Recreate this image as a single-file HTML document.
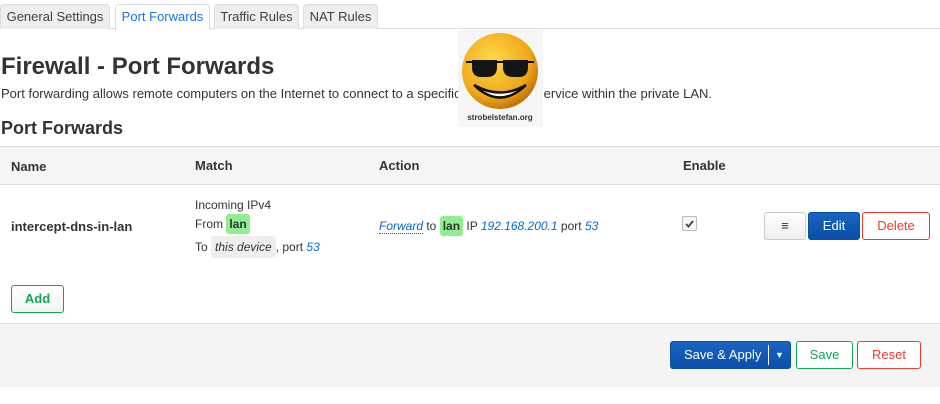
<!DOCTYPE html>
<html><head><meta charset="utf-8"><style>
*{margin:0;padding:0;box-sizing:border-box}
body{width:940px;height:404px;background:#fff;font-family:"Liberation Sans",Arial,sans-serif;color:#333;position:relative;overflow:hidden;font-size:13px}
.a{position:absolute;white-space:nowrap}
.tab{position:absolute;top:4px;height:25px;border:1px solid #ddd;border-bottom:none;border-radius:4px 4px 0 0;background:#eee;font-size:13px;line-height:24px;text-align:center;color:#404040}
.tab.act{background:#fff;color:#1a73e8;height:26px}
.lbl{display:inline-block;background:#90ee90;border-radius:3px;padding:0 3px;font-weight:bold;line-height:20px}
.gr{display:inline-block;background:#eee;border-radius:3px;padding:0 4px;font-style:italic;line-height:22px}
.bl{color:#0069d6;font-style:italic}
.btn{position:absolute;border-radius:3px;font-size:13px;text-align:center;border:1px solid}
</style></head><body>
<div class="a" style="left:0;top:28px;width:940px;border-top:1px solid #ddd"></div>
<div class="tab" style="left:0;width:110px">General Settings</div>
<div class="tab act" style="left:115px;width:95px">Port Forwards</div>
<div class="tab" style="left:214px;width:85px">Traffic Rules</div>
<div class="tab" style="left:303px;width:75px">NAT Rules</div>
<div class="a" style="left:1px;top:53px;font-size:24px;font-weight:bold;color:#333">Firewall - Port Forwards</div>
<div class="a" style="left:1px;top:86px;font-size:13px">Port forwarding allows remote computers on the Internet to connect to a specific computer or service within the private LAN.</div>
<div class="a" style="left:458px;top:30px;width:85px;height:97px;background:#f6f6f6">
<svg width="85" height="97" viewBox="0 0 85 97">
<defs><radialGradient id="g" cx="0.4" cy="0.35" r="0.7"><stop offset="0" stop-color="#ffd84a"/><stop offset="0.7" stop-color="#f0a818"/><stop offset="1" stop-color="#b86a08"/></radialGradient></defs>
<circle cx="42" cy="41" r="38" fill="url(#g)"/>
<path d="M8 32 L76 32" stroke="#111" stroke-width="2"/>
<path d="M14 30 h25 v7 q0 10 -10 10 h-6 q-9 0 -9 -10z" fill="#151515"/>
<path d="M45 30 h25 v7 q0 10 -9 10 h-6 q-10 0 -10 -10z" fill="#151515"/>
<path d="M16 55 Q42 80 68 55 Q42 70 16 55Z" fill="#fff" stroke="#111" stroke-width="2.5"/>
<text x="42" y="90" font-size="8" font-weight="bold" text-anchor="middle" fill="#333" font-family="Liberation Sans">strobelstefan.org</text>
</svg></div>
<div class="a" style="left:1px;top:118px;font-size:18px;font-weight:bold">Port Forwards</div>
<div class="a" style="left:0;top:146px;width:940px;height:39px;background:#f5f5f5;border-top:1px solid #ddd;border-bottom:1px solid #ddd"></div>
<div class="a" style="left:11px;top:159px;font-weight:bold">Name</div>
<div class="a" style="left:195px;top:158px;font-weight:bold">Match</div>
<div class="a" style="left:379px;top:158px;font-weight:bold">Action</div>
<div class="a" style="left:683px;top:158px;font-weight:bold">Enable</div>
<div class="a" style="left:11px;top:219px;font-weight:bold">intercept-dns-in-lan</div>
<div class="a" style="left:195px;top:198px;font-size:12px">Incoming IPv4</div>
<div class="a" style="left:195px;top:214px;font-size:12px">From <span class="lbl">lan</span></div>
<div class="a" style="left:195px;top:236px;font-size:12px">To <span class="gr">this device</span>, port <span class="bl">53</span></div>
<div class="a" style="left:379px;top:216px;font-size:12px"><span class="bl" style="border-bottom:1px dotted #0069d6">Forward</span> to <span class="lbl">lan</span> IP <span class="bl">192.168.200.1</span> port <span class="bl">53</span></div>
<div class="a" style="left:682px;top:216px;width:15px;height:15px;border:1px solid #bbb;border-radius:2px;background:#f8f8f8"><svg width="13" height="13" viewBox="0 0 13 13"><path d="M3 7 L5.5 9.5 L10 4" stroke="#444" stroke-width="1.8" fill="none"/></svg></div>
<div class="btn" style="left:764px;top:212px;width:42px;height:28px;border-color:#ccc;background:linear-gradient(#fff,#eee);line-height:26px;font-weight:bold">≡</div>
<div class="btn" style="left:808px;top:212px;width:52px;height:28px;border-color:#0a4fa0;background:linear-gradient(#1a64c4,#0a4fa8);color:#fff;line-height:26px">Edit</div>
<div class="btn" style="left:862px;top:212px;width:68px;height:28px;border-color:#f03a2a;background:#fff;color:#f03a2a;line-height:26px">Delete</div>
<div class="btn" style="left:11px;top:285px;width:53px;height:28px;border-color:#13a556;background:linear-gradient(#fff,#f4f4f4);color:#13a556;line-height:26px;font-weight:bold">Add</div>
<div class="a" style="left:0;top:323px;width:940px;height:64px;background:#f4f4f4;border-top:1px solid #ddd"></div>
<div class="btn" style="left:670px;top:341px;width:121px;height:28px;border-color:#0a4fa0;background:linear-gradient(#1a64c4,#0a4fa8);color:#fff;line-height:26px;text-align:left;padding-left:13px">Save &amp; Apply<span style="position:absolute;left:97px;top:3px;height:20px;border-left:1px solid #fff"></span><span style="position:absolute;left:104px;top:0;font-size:9px">▼</span></div>
<div class="btn" style="left:796px;top:341px;width:57px;height:28px;border-color:#13a556;background:#fff;color:#13a556;line-height:26px">Save</div>
<div class="btn" style="left:857px;top:341px;width:64px;height:28px;border-color:#f03a2a;background:#fff;color:#f03a2a;line-height:26px">Reset</div>
</body></html>
